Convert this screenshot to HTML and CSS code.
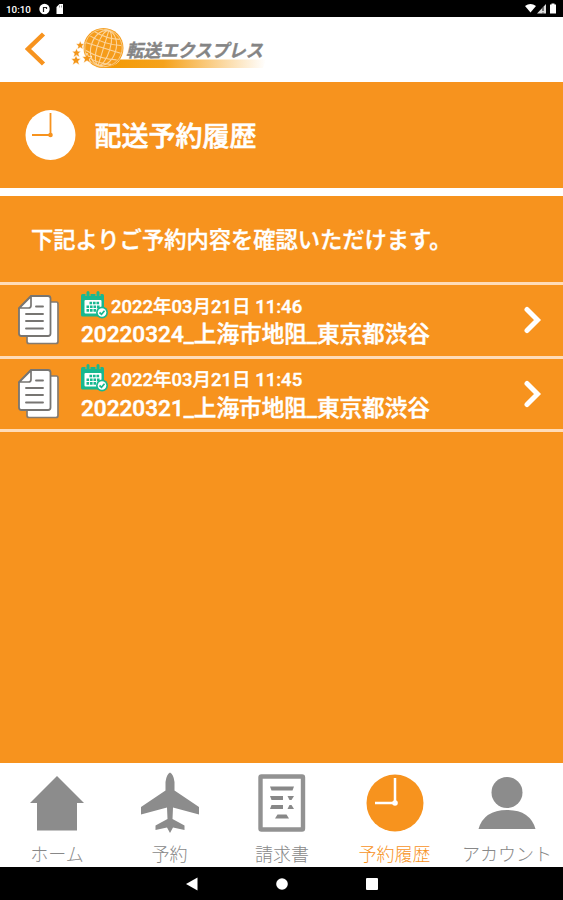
FILE: index.html
```html
<!DOCTYPE html>
<html lang="ja">
<head>
<meta charset="utf-8">
<title>配送予約履歴</title>
<link rel="stylesheet" href="styles.css">
</head>
<body>
<svg class="defs" width="0" height="0">
  <defs>
    <symbol id="docs" viewBox="0 0 42 50">
      <path d="M9 7H38.500Q40 7 40 9V46.500Q40 48.500 38 48.500H11Q9 48.500 9 46.500Z" fill="#fff" stroke="#857b70" stroke-width="1.700"/>
      <path d="M13 1H30Q32.500 1 32.500 3.500V38.500Q32.500 41 30 41H3.500Q1 41 1 38.500V13Z" fill="#fff" stroke="#777572" stroke-width="1.800"/>
      <path d="M1.500 13L13 1.500V10.500Q13 13 10.500 13Z" fill="#fff" stroke="#777572" stroke-width="1.700"/>
      <path d="M18 11.500H25M8 19H25M8 26H25M8 33.500H25" stroke="#777572" stroke-width="1.900" stroke-linecap="round"/>
    </symbol>
    <symbol id="calendar" viewBox="0 0 27 28">
      <path d="M0 4.500Q0 3 1.500 3H21.500Q23 3 23 4.500V25.500H1.500Q0 25.500 0 24Z" fill="#17b890"/>
      <path d="M7 0V5M17 0V5" stroke="#f7931e" stroke-width="5"/>
      <path d="M7 1.500V5M17 1.500V5" stroke="#17b890" stroke-width="3" stroke-linecap="round"/>
      <rect x="3.500" y="9" width="17" height="13.500" rx="1" fill="#fff"/>
      <path d="M8.500 12H19M5.500 15.700H19M5.500 19.400H15" stroke="#17b890" stroke-width="2.600" stroke-dasharray="2.600 .9"/>
      <circle cx="21" cy="21.500" r="6" fill="#17b890"/>
      <circle cx="21" cy="21.500" r="4.300" fill="#fff"/>
      <path d="M18.500 21.500L20.500 23.300L23.500 19.800" fill="none" stroke="#17b890" stroke-width="1.700"/>
    </symbol>
    <symbol id="next" viewBox="0 0 18 28">
      <path d="M3 3.500L13.500 14L3 24.500" fill="none" stroke="#fff" stroke-width="5" stroke-linecap="round"/>
    </symbol>
  </defs>
</svg>
<div class="screen">
  <div class="status">
    <span class="time">10:10</span>
    <svg class="status-left" width="24" height="12" viewBox="0 0 24 12"><circle cx="5.500" cy="6" r="5.200" fill="#fff"/><path d="M4.500 9V4.500H7.500V6" fill="none" stroke="#222" stroke-width="1.200"/><path d="M17.500 4L20.500 1H26V11H17.500Z" fill="#fff"/><path d="M20.500 2.500V4.500M22.500 2.500V4.500" stroke="#777" stroke-width=".7"/></svg>
    <svg class="status-right" width="34" height="12" viewBox="0 0 34 12"><path d="M1 3Q6.500-1 12 3L6.500 9.500Z" fill="#fff"/><path d="M13 10.500L22 1V10.500Z" fill="#ddd"/><path d="M19 4V8M19 9.500V10.500" stroke="#333" stroke-width="1.200"/><path d="M26 1.500H27.500V.5H30.500V1.500H32V10.500H26Z" fill="#fff"/></svg>
  </div>
  <header class="header">
    <svg class="back" width="22" height="34" viewBox="0 0 22 34"><path d="M18.500 2L3 17L18.500 32" fill="none" stroke="#f7931e" stroke-width="4.500"/></svg>
    <svg class="logo" width="204" height="44" viewBox="0 0 204 44">
      <defs><linearGradient id="swoosh"><stop offset="0" stop-color="#f39800"/><stop offset=".4" stop-color="#f5a21c"/><stop offset="1" stop-color="#fff"/></linearGradient></defs>
      <path d="M24 41Q45 41 49 32.500H195L192 41Z" fill="url(#swoosh)"/>
      <circle cx="32.500" cy="21" r="20" fill="#f59c1b"/>
      <circle cx="32.500" cy="21" r="18.700" fill="none" stroke="#fbd293" stroke-width=".9"/>
      <g fill="none" stroke="#fcd59d" stroke-width="1.100" transform="translate(-2.500 -.5) rotate(17 35 21.500)"><path d="M35 3V40M17 21.500H53M19 14Q35 18 51 14M22 8.500Q35 12 48 8.500M19 29Q35 33 51 29M23 35Q35 38 47 35"/><ellipse cx="35" cy="21.500" rx="6.500" ry="18"/><ellipse cx="35" cy="21.500" rx="12.500" ry="18"/></g>
      <g fill="#f39518" stroke="#fff" stroke-width=".6"><path id="star" d="M5 28L6.400 31.400L10 31.500L7.300 34L8.300 38L5 35.800L1.700 38L2.600 34L0 31.500L3.600 31.400Z"/><use href="#star" transform="translate(11 -2)"/><use href="#star" transform="translate(1 -4) scale(.9)"/><use href="#star" transform="translate(5 -10) scale(.85)"/></g>
      <text class="wordmark" x="55" y="30" textLength="137" lengthAdjust="spacingAndGlyphs">転送エクスプレス</text>
    </svg>
  </header>
  <section class="hero">
    <svg width="52" height="52" viewBox="0 0 52 52"><circle cx="25.500" cy="26" r="25" fill="#fff"/><path d="M25.500 4V26H7" fill="none" stroke="#f7931e" stroke-width="1.800"/><circle cx="25.500" cy="26" r="2.300" fill="#f7931e"/></svg>
    <h1>配送予約履歴</h1>
  </section>
  <main class="content">
    <p class="message">下記よりご予約内容を確認いただけます。</p>
    <ul class="list">
      <li class="row">
        <svg class="docs"><use href="#docs"/></svg>
        <div class="info"><div class="date"><svg class="calendar"><use href="#calendar"/></svg><span>2022年03月21日 11:46</span></div><div class="name">20220324_上海市地阻_東京都渋谷</div></div>
        <svg class="next"><use href="#next"/></svg>
      </li>
      <li class="row">
        <svg class="docs"><use href="#docs"/></svg>
        <div class="info"><div class="date"><svg class="calendar"><use href="#calendar"/></svg><span>2022年03月21日 11:45</span></div><div class="name">20220321_上海市地阻_東京都渋谷</div></div>
        <svg class="next"><use href="#next"/></svg>
      </li>
    </ul>
  </main>
  <nav class="tabs">
    <div class="tab"><svg viewBox="0 0 62 66"><path d="M31 5L58 32H51V59.500H11V32H4Z" fill="#8c8c8c"/></svg><span>ホーム</span></div>
    <div class="tab"><svg viewBox="0 0 62 66"><path d="M31 1.500Q34.500 3 35.500 11V19.500L60 36V43.500L34 36.500L33.500 48L45.500 54.500V59L34 56.500L31 62L28 56.500L16.500 59V54.500L28.500 48L28 36.500L2 43.500V36L26.500 19.500V11Q27.500 3 31 1.500Z" fill="#8c8c8c"/></svg><span>予約</span></div>
    <div class="tab"><svg viewBox="0 0 62 66"><rect x="9.500" y="5.500" width="42.500" height="53" rx="1" fill="none" stroke="#929292" stroke-width="4.400"/><g fill="#888"><path d="M19 15.500H43L41.500 19.500H20.500ZM19 25H32V29H20.500ZM36.500 25H43L40.500 29H38.500ZM20.500 34H32V38H19ZM38.500 34H40.500L43 38H36.500ZM26.500 43.500H35.500L38 47.500H24Z"/></g></svg><span>請求書</span></div>
    <div class="tab active"><svg viewBox="0 0 62 66"><circle cx="31" cy="32" r="28.500" fill="#f7931e"/><path d="M31 7V32H11" fill="none" stroke="#fff" stroke-width="2.500"/><circle cx="31" cy="32" r="2.800" fill="#fff"/></svg><span>予約履歴</span></div>
    <div class="tab"><svg viewBox="0 0 62 66"><circle cx="31" cy="21.500" r="15.500" fill="#8c8c8c"/><path d="M2.500 58Q8 39 31 39T59.500 58Z" fill="#8c8c8c"/></svg><span>アカウント</span></div>
  </nav>
  <div class="system">
    <svg width="12" height="14" viewBox="0 0 12 14"><path d="M0 7L11.500 .5V13.500Z" fill="#fff"/></svg>
    <svg width="12" height="14" viewBox="0 0 12 14"><circle cx="6" cy="7" r="5.800" fill="#fff"/></svg>
    <svg width="12" height="14" viewBox="0 0 12 14"><rect x="0" y="1" width="12" height="12" rx="1" fill="#fff"/></svg>
  </div>
</div>
</body>
</html>
```
FILE: styles.css
```css
* { box-sizing: border-box; }
body, h1, p, ul { margin: 0; padding: 0; }
body { font-family: Roboto, "Noto Sans CJK JP", sans-serif; background: #fff; }
svg { display: block; flex: none; }
.defs { position: absolute; }
.screen { width: 563px; height: 900px; display: flex; flex-direction: column; overflow: hidden; }
.status { height: 16.500px; background: #000; color: #fff; display: flex; align-items: center; padding: 2px 5px 0 6px; }
.time { font-size: 9.800px; font-weight: 500; width: 33px; }
.status-right { margin-left: auto; }
.header { height: 65.500px; display: flex; align-items: center; padding-left: 25px; }
.logo { margin-left: 24px; }
.wordmark { font: italic 700 18px "Noto Sans CJK JP", sans-serif; fill: #858585; stroke: #858585; stroke-width: .4px; }
.hero { height: 106px; background: #f7931e; display: flex; align-items: center; padding-left: 25px; gap: 17.500px; color: #fff; }
h1 { font-size: 27px; font-weight: 500; line-height: 40px; padding-top: 3px; -webkit-text-stroke: .6px #fff; }
.content { flex: 1; margin-top: 8px; background: #f7931e; color: #fff; }
.message { height: 86px; line-height: 88px; padding-left: 31px; font-size: 22.300px; font-weight: 500; letter-spacing: -.03px; -webkit-text-stroke: .4px #fff; }
.list { list-style: none; border-top: 3px solid #ffdcb8; }
.row { height: 73.500px; border-bottom: 3px solid #ffdcb8; display: flex; align-items: center; padding: 0 21px 0 18px; }
.docs { width: 42px; height: 50px; }
.info { margin-left: 21px; flex: 1; white-space: nowrap; }
.date { display: flex; align-items: center; height: 29px; font-size: 18.500px; font-weight: 500; gap: 3px; -webkit-text-stroke: .4px #fff; }
.calendar { width: 27px; height: 28px; }
.name { font-size: 22.600px; font-weight: 500; line-height: 31px; -webkit-text-stroke: .5px #fff; }
.next { width: 18px; height: 28px; }
.tabs { height: 104px; background: #fff; display: grid; grid-template-columns: repeat(5, 112.500px); padding: 8px 0 0 .800px; color: #888; }
.tab { display: flex; flex-direction: column; align-items: center; }
.tab svg { width: 62px; height: 66px; }
.tab span { font-size: 18px; line-height: 26px; margin-top: 5px; font-weight: 300; white-space: nowrap; }
.tab.active span { color: #f7931e; }
.system { height: 33px; background: #000; display: flex; align-items: center; justify-content: center; gap: 78px; }
```
